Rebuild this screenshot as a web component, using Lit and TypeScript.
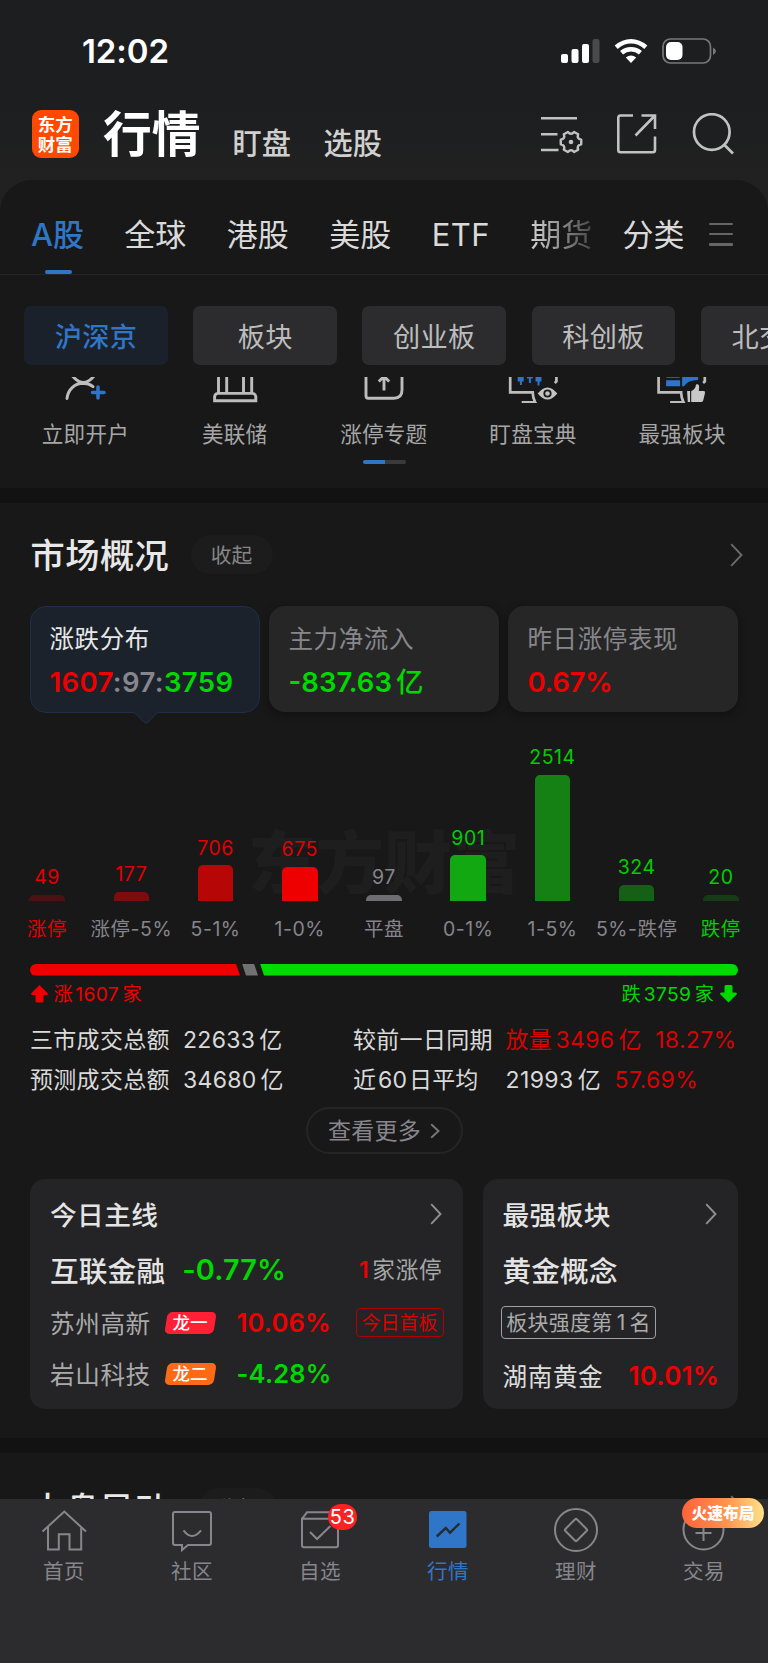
import { LitElement, html, css, svg, nothing } from "lit";
import { customElement } from "lit/decorators.js";

interface Bar { count: string; label: string; height: number; color: string; text: string; labelColor?: string }

const GREY = "#86858b";
const RED = "#e00000";
const GREEN = "#00ce00";

const bars: Bar[] = [
  { count: "49", label: "涨停", height: 6.5, color: "#4a1212", text: RED, labelColor: RED },
  { count: "177", label: "涨停-5%", height: 9.5, color: "#7e0c0c", text: RED },
  { count: "706", label: "5-1%", height: 36, color: "#b60606", text: RED },
  { count: "675", label: "1-0%", height: 34.5, color: "#ee0000", text: RED },
  { count: "97", label: "平盘", height: 6.5, color: "#6e6e70", text: GREY },
  { count: "901", label: "0-1%", height: 46, color: "#12a812", text: GREEN },
  { count: "2514", label: "1-5%", height: 126.5, color: "#158115", text: GREEN },
  { count: "324", label: "5%-跌停", height: 16.5, color: "#165f16", text: GREEN },
  { count: "20", label: "跌停", height: 6.5, color: "#173a17", text: GREEN, labelColor: GREEN },
];

const polar = (cx: number, cy: number, r: number, deg: number) => {
  const a = (deg * Math.PI) / 180;
  return `${(cx + r * Math.cos(a)).toFixed(2)} ${(cy + r * Math.sin(a)).toFixed(2)}`;
};

// Six-toothed gear outline: rounded teeth every 60 degrees with shallow notches between.
const gear = (cx: number, cy: number) =>
  "M" + [0, 60, 120, 180, 240, 300].map((d) =>
    `${polar(cx, cy, 10.5, d - 13)}L${polar(cx, cy, 10.5, d + 13)}Q${polar(cx, cy, 6.4, d + 30)} `).join("") +
  `${polar(cx, cy, 10.5, -13)}Z`;

const monitor = svg`
  <path d="M6 0V15.4H28.5Q28.6 21 31 25.3H17.5" fill="none" stroke="#bdbdbd" stroke-width="2.7"/>
  <path d="M52.2 0V4.5L50.5 6" fill="none" stroke="#bdbdbd" stroke-width="2.7"/>`;

const quick = [
  { label: "立即开户", icon: svg`
    <g fill="none" stroke-linecap="round" stroke-width="3">
      <path d="M17.5 -1Q28.5 12 39 -1M12 21.4C13.2 12 20 6.3 28 6.3Q34 6.5 38 9.6" stroke="#bdbdbd"/>
      <path d="M43 10V21M37.5 15.5H49" stroke="#2f74c6" stroke-width="3.6"/></g>` },
  { label: "美联储", icon: svg`
    <path d="M13.5 0V16M21.7 0V16M38.5 0V16M46.7 0V16M9.6 23.8V19.5Q10.4 16.4 13 16.4H47.5Q50.4 16.8 50.8 19.5V23.8Z" fill="none" stroke="#bdbdbd" stroke-width="2.9"/>` },
  { label: "涨停专题", icon: svg`
    <path d="M12 0V19Q12 21.2 14.2 21.2H40Q48 21.2 48 13V0M30 13.5V1M24.8 4.5L30 -.6L35.2 4.5" fill="none" stroke="#bdbdbd" stroke-width="2.9"/>` },
  { label: "盯盘宝典", icon: svg`<g transform="translate(1.2 0)">${monitor}
    <path d="M13.5 0h6v4.5h-1.8V8h-2V4.5h-2.2zM22.7 0h6v1.5h-2v4.5h-2V1.5h-2zM31.3 0h6v4.5h-2V8.5h-2V4.5h-2z" fill="#2f74c6"/>
    <path d="M33.5 16.5Q43.3 4.5 53.1 16.5Q43.3 28.5 33.5 16.5z" fill="#c4c4c4"/>
    <circle cx="43.3" cy="16.5" r="3.2" fill="#c4c4c4" stroke="#181818" stroke-width="1.8"/></g>` },
  { label: "最强板块", icon: svg`<g transform="translate(.6 0)">${monitor}
    <path d="M13.5 3.3H27.5V9.3H13.5zM14 0H27V.8H14zM29.5 0H45.5V3Q35 3 31.5 9.3H29.5z" fill="#2f74c6"/>
    <path d="M34.5 14h3v11h-2.3zM38.6 14.3Q43 12 43.4 7.5Q46.7 6.2 46.5 10.5L46.2 14H51.3Q52.7 14.2 52.4 16L50.6 23.5Q50 25 48.5 25H38.6z" fill="#c8c8c8"/></g>` },
];

const tabs = [
  { label: "首页", icon: svg`<path d="M2.5 25.5L24.3 5.5L46 25.5M8 21V43.5H18.8V28.2H29.5V43.5H41.2V21"/>` },
  { label: "社区", icon: svg`<path d="M7 6H41Q43 6 43 8V37Q43 39 41 39H20L14 44V39H7Q5 39 5 37V8Q5 6 7 6zM15.5 24.3Q24 35.5 33 24.3"/>` },
  { label: "自选", count: "53", icon: svg`<path d="M6 12.8L11 6.3H37L42 12.8M6 12.8H42V39Q42 41.2 40 41.2H8Q6 41.2 6 39zM14 26L21 33L34.5 20"/>` },
  { label: "行情", active: true, icon: svg`<rect x="5" y="5" width="37.5" height="37" rx="2.5" fill="#3076c8" stroke="none"/><path d="M12.7 30.5L21.8 22L26 26.7L35.5 17.5" stroke="#242c36" stroke-width="2.4"/>` },
  { label: "理财", icon: svg`<circle cx="24" cy="24" r="21"/><rect x="15.8" y="15.8" width="16.4" height="16.4" rx="1.5" transform="rotate(45 24 24)"/>` },
  { label: "交易", promo: "火速布局", icon: svg`<circle cx="23.5" cy="23.5" r="20"/><path d="M15.5 27H31.5M23.5 17V35"/>` },
];

const chevron = (w: number, h: number, color: string) => html`
  <svg width=${w} height=${h} viewBox="0 0 ${w} ${h}">
    <path d="M1.2 1.2L${w - 1.5} ${h / 2}L1.2 ${h - 1.2}" fill="none" stroke=${color} stroke-width="1.9"/>
  </svg>`;

@customElement("app-root")
export class AppRoot extends LitElement {
  static styles = css`
    :host { display: block; width: 768px; font-family: Inter, "Noto Sans CJK SC", sans-serif; color: #dedede; }
    * { box-sizing: border-box; }
    svg { display: block; flex: none; }
    .screen { width: 768px; height: 1663px; overflow: hidden; display: flex; flex-direction: column; background: #181818; white-space: nowrap; }
    .top { height: 180px; flex: none; background: linear-gradient(#1d1e20 0 60%, #212121); }
    .status { height: 102px; display: flex; align-items: center; padding: 0 51px 0 82px; color: #fff; }
    .time { font-size: 33px; font-weight: 600; letter-spacing: -.1px; line-height: 40px; flex: 1; }
    .signals { display: flex; align-items: center; gap: 14px; }
    .nav { height: 64px; display: flex; align-items: center; padding: 0 34px 0 31.5px; }
    .logo { width: 47.5px; height: 47.5px; border-radius: 9px; background: #ff4800; color: #fff; font-size: 17.5px; line-height: 19.5px; font-weight: 700; text-align: center; padding-top: 4px; font-family: "Noto Sans CJK SC", sans-serif; }
    .nav-title { font-size: 48.8px; line-height: 60px; font-weight: 700; color: #fff; margin: 2px 0 0 24px; }
    .nav-link { font-size: 29.2px; line-height: 40px; font-weight: 500; color: #d0d0d0; margin: 20px 0 0 32.5px; }
    .nav-title + .nav-link { margin-left: 32px; }
    .nav-icons { display: flex; margin-left: auto; gap: 33px; }
    .nav-icons .share { margin-right: 1px; }
    .head-bg { background: #212121; flex: none; }
    .markets { height: 95px; border-radius: 32px 32px 0 0; background: #181818; display: flex; padding-left: 31px; border-bottom: 1px solid #252525; font-size: 31px; line-height: 46px; color: #dadada; font-weight: 400; }
    .market-list { display: flex; gap: 40.5px; width: 591.5px; padding-top: 32px; }
    .market { position: relative; height: 62px; }
    .market.on { color: #3076c8; font-weight: 500; width: 52.8px; }
    .market.on::after { content: ""; position: absolute; left: 13.5px; bottom: 0; width: 27.5px; height: 4px; border-radius: 2px; background: #3076c8; }
    .market.etf { letter-spacing: .35px; }
    .fade { background: linear-gradient(90deg, #c8c8c8 10%, #303030 115%); background-clip: text; -webkit-background-clip: text; color: transparent; height: 47px; }
    .more { padding-top: 32px; }
    .menu { display: grid; gap: 7.5px; align-content: start; padding: 42.5px 0 0 24px; }
    .menu i { width: 24px; height: 2.7px; background: #666; border-radius: 1px; }
    .chips { display: flex; gap: 25.3px; padding: 31px 0 0 24px; height: 102px; flex: none; overflow: hidden; }
    .chip { width: 143.9px; height: 59px; flex: none; border-radius: 7px; background: #2c2c2e; color: #bcbcbd; font-size: 27.2px; letter-spacing: .3px; line-height: 63.5px; text-align: center; }
    .chip.on { background: #1a212a; color: #3076c8; font-weight: 500; }
    .quick { display: grid; grid-template-columns: repeat(5, 149.2px); padding: 0 10.8px; height: 83px; flex: none; justify-items: center; align-content: start; }
    .quick div { display: grid; justify-items: center; font-size: 21.6px; line-height: 30px; letter-spacing: .2px; color: #a6a6a6; gap: 16px; }
    .quick svg { overflow: hidden; }
    .pager { width: 43px; height: 4px; border-radius: 2px; align-self: center; background: linear-gradient(90deg, #3076c8 50%, #3a3a3c 50%); flex: none; }
    .band { height: 15px; background: #121212; flex: none; }
    .band.first { margin-top: 24px; }
    .section-head { display: flex; align-items: center; height: 103px; flex: none; padding: 0 25px 0 30.5px; }
    .section-head h2 { margin: 0; padding-top: 2px; font-size: 34.2px; letter-spacing: .5px; line-height: 44px; font-weight: 500; color: #e8e8e8; width: 160.5px; flex: none; }
    .pill { width: 82px; height: 39px; border-radius: 20px; background: #1c1c1c; color: #858585; font-size: 20.8px; line-height: 41px; text-align: center; padding-right: 1px; }
    .section-head svg { margin-left: auto; }
    .cards { display: flex; gap: 9px; padding: 0 30px; flex: none; }
    .card { position: relative; width: 230px; height: 106px; border-radius: 16px; background: #262626; padding: 15px 19.5px 0; box-shadow: 0 3px 10px #0005; font-size: 24.5px; line-height: 36px; color: #87868c; letter-spacing: .6px; font-weight: 400; }
    .card.on { background: #1b222b; color: #e8e8e8; border: 1px solid #1d3048; box-shadow: none; height: 107px; padding: 14px 18.5px 0; }
    .tip { position: absolute; left: 101.5px; top: 105px; }
    .value { font-size: 27.5px; line-height: 36px; font-weight: 600; letter-spacing: 0; padding-top: 7px; }
    .card.on .value { letter-spacing: .4px; }
    .value.up { letter-spacing: -.3px; }
    .up { color: #ee0000; } .down { color: #00d800; } .flat { color: #87868c; }
    .unit { margin-left: 4px; font-weight: 500; }
    .chart { position: relative; height: 233px; flex: none; display: grid; grid-template-columns: repeat(9, 1fr); padding: 0 5px 4px; align-items: end; margin-top: -1px; }
    .watermark { position: absolute; left: 248px; top: 97px; font: 900 68px/100px "Noto Sans CJK SC", sans-serif; color: #1e1e1e; }
    .col { position: relative; display: flex; flex-direction: column; align-items: center; font-size: 19.5px; line-height: 24px; letter-spacing: .5px; }
    .bar { width: 35.5px; border-radius: 5px 5px 0 0; margin: 5.5px 0 16px; }
    .label { color: #86858b; }
    .split { margin: 18.5px 30px 0; height: 12px; border-radius: 6px; overflow: hidden; display: flex; flex: none; }
    .seg-up { width: 210px; background: #ee0000; clip-path: polygon(0 0, 206px 0, 210px 100%, 0 100%); }
    .seg-flat { width: 16px; margin-left: 2px; background: #717173; clip-path: polygon(0 0, 12px 0, 100% 100%, 4px 100%); }
    .seg-down { flex: 1; margin-left: 2px; background: #00db00; clip-path: polygon(0 0, 100% 0, 100% 100%, 4px 100%); }
    .counts { display: flex; justify-content: space-between; align-items: center; padding: 2px 31px 0; height: 35px; flex: none; font-size: 19.2px; line-height: 28px; }
    .counts div { display: flex; align-items: center; }
    .counts .ar { margin-right: 5.5px; } .counts .al { margin-left: 6px; }
    .counts b { font-weight: 400; margin: 0 3.5px 0 3px; letter-spacing: .4px; }
    .counts .up b { margin-left: 2.5px; }
    .stats { display: grid; grid-template-columns: 153px 170px 152.5px auto; padding: 9px 0 0 30px; font-size: 23px; line-height: 40px; flex: none; letter-spacing: .3px; color: #dadada; }
    .stats u { text-decoration: none; margin-left: 4px; }
    .stats b { font-weight: 400; margin-left: 3.5px; } .stats s { text-decoration: none; margin-left: 13.5px; }
    .stats .near b, .stats .near u { margin-left: 2px; }
    .stats .near { letter-spacing: .1px; }
    .stats .red { color: #dc0000; }
    .stats .avg { letter-spacing: .4px; }
    .see { align-self: center; width: 157px; height: 47px; border-radius: 24px; border: 2px solid #252527; display: flex; align-items: center; justify-content: center; gap: 9px; color: #87868c; font-size: 23px; letter-spacing: .3px; margin: 7.5px 0 25px; flex: none; line-height: 40px; padding-top: 1px; }
    .panels { display: flex; gap: 20px; padding: 0 30px; flex: none; }
    .panel { height: 230px; border-radius: 15px; background: #242426; padding: 0 20px; width: 432.5px; flex: none; }
    .panel.side { width: 255.5px; }
    .row { display: flex; align-items: center; }
    .r1 { height: 69px; font-size: 26.7px; font-weight: 500; letter-spacing: .4px; justify-content: space-between; color: #e4e4e4; }
    .r1 svg { margin: 1px 1px 0 0; }
    .r2 { height: 42px; font-size: 28.6px; font-weight: 500; color: #e4e4e4; letter-spacing: .2px; }
    .r2 .num { font-size: 28.8px; margin-left: 17px; font-weight: 600; }
    .r2 .hits { font-size: 22.6px; font-weight: 400; color: #a8a8a8; margin-left: auto; letter-spacing: .8px; margin-top: -2px; }
    .hits b { font-weight: 600; color: #ee0000; margin-right: 3px; }
    .r3 { height: 65px; } .r4 { height: 37px; }
    .stock { font-size: 24.6px; letter-spacing: .6px; color: #aaa; width: 113.5px; flex: none; margin-top: -2px; }
    .rank { width: 53px; height: 22px; display: grid; place-items: center; position: relative; z-index: 0; color: #fff; font-size: 17.5px; line-height: 22px; font-weight: 500; flex: none; }
    .rank::before { content: ""; position: absolute; inset: 0 2px; border-radius: 5px; transform: skewX(-9deg); background: #ff2036; z-index: -1; }
    .rank.two::before { background: #ff6a17; }
    .pct { font-size: 25.5px; font-weight: 600; margin-left: 20px; letter-spacing: .2px; }
    .first-tag { width: 88px; height: 29px; border: 1px solid #b00000; border-radius: 4px; color: #dc0000; font-size: 19px; line-height: 29px; text-align: center; margin-left: auto; margin-right: -1px; }
    .strength { width: 155px; height: 33px; border: 1px solid #a0a0a0; border-radius: 4px; color: #ababab; font-size: 21px; line-height: 32px; text-align: center; margin-left: -1.5px; letter-spacing: .3px; }
    .strength b { font-weight: 400; margin: 0 4px; }
    .side .stock { color: #dedede; }
    .side .pct { margin-left: auto; margin-right: -1px; font-size: 26px; letter-spacing: .2px; }
    .side .r4 { padding-top: 4px; }
    .band.second { margin-top: 29px; }
    .next { height: 45.5px; overflow: hidden; flex: none; }
    .next .section-head { height: 108px; }
    .next h2 { width: 168.5px; padding-top: 6px; } .next .pill { width: 78px; line-height: 41px; }
    .tabbar { height: 164px; flex: none; background: #2c2c2e; display: grid; grid-template-columns: repeat(6, 128px); position: relative; color: #87868c; }
    .tab { position: relative; display: grid; justify-items: center; align-content: start; padding-top: 7px; font-size: 20.5px; line-height: 28px; letter-spacing: .5px; gap: 4px; }
    .tab.on { color: #3076c8; }
    .count { position: absolute; left: 72px; top: 5px; width: 29px; height: 26px; border-radius: 13px; background: #fa2222; color: #fff; font-size: 20px; line-height: 27px; text-align: center; }
    .promo { position: absolute; left: 42px; top: -1px; width: 82px; height: 30px; border-radius: 15px; background: linear-gradient(90deg, #ff6338, #ff9450 55%, #ffe289); color: #fff; font: 900 15.8px/30px "Noto Sans CJK SC", sans-serif; text-align: center; letter-spacing: 0; }
  `;

  private statusBar() {
    return html`<div class="status">
      <span class="time">12:02</span>
      <div class="signals">
        <svg width="39" height="26" viewBox="0 0 39 26" fill="#fff">
          <rect x="0" y="16" width="7" height="9" rx="2"/><rect x="10.5" y="11" width="7" height="14" rx="2"/>
          <rect x="21" y="6" width="7" height="19" rx="2"/><rect x="31.5" y="1" width="7" height="24" rx="2" fill="#4a4a4c"/>
        </svg>
        <svg width="34" height="26" viewBox="0 0 34 26" fill="none" stroke="#fff" stroke-width="4.6">
          <path d="M2.2 9.2Q9 3.2 17 3.2T31.8 9.2M7.6 14.7Q11.5 11.2 17 11.2T26.4 14.7"/>
          <path d="M11.8 19.5Q17 15.5 22.2 19.5L17 25z" fill="#fff" stroke="none"/>
        </svg>
        <svg width="55" height="26" viewBox="0 0 55 26">
          <rect x="1" y="1" width="47.5" height="24" rx="7.5" fill="none" stroke="#77787a" stroke-width="1.7"/>
          <rect x="4" y="4" width="16.5" height="18" rx="5" fill="#fff"/>
          <path d="M51 9.5Q54 11 54 13T51 17z" fill="#77787a"/>
        </svg>
      </div>
    </div>`;
  }

  private nav() {
    return html`<div class="nav">
      <div class="logo">东方<br>财富</div>
      <span class="nav-title">行情</span><span class="nav-link">盯盘</span><span class="nav-link">选股</span>
      <div class="nav-icons">
        <svg width="43" height="42" viewBox="0 0 43 42" fill="none" stroke="#c2c2c2" stroke-width="2.6">
          <path d="M1 5.3H37M1 21.3H17.5M1 37H18.5"/>
          <path d=${gear(31, 29)} stroke-width="2.4" stroke-linejoin="round"/>
          <circle cx="31" cy="29" r="2.3" fill="#c2c2c2" stroke="none"/>
        </svg>
        <svg class="share" width="42" height="42" viewBox="0 0 42 42" fill="none" stroke="#c2c2c2" stroke-width="2.6">
          <path d="M17 2.5H4.5Q2.3 2.5 2.3 4.7V37Q2.3 39.3 4.5 39.3H36.7Q39 39.3 39 37V23.5M25.5 2.5H39V16M38.5 3L19.5 22.5"/>
        </svg>
        <svg width="42" height="42" viewBox="0 0 42 42" fill="none" stroke="#c2c2c2" stroke-width="2.7">
          <circle cx="19.8" cy="19" r="17.8"/><path d="M31.5 31L41 40.5"/>
        </svg>
      </div>
    </div>`;
  }

  private overview() {
    return html`
      <div class="section-head"><h2>市场概况</h2><span class="pill">收起</span>${chevron(13, 24, "#6b6b6d")}</div>
      <div class="cards">
        <div class="card on">涨跌分布
          <div class="value"><span class="up">1607</span><span class="flat">:97:</span><span class="down">3759</span></div>
          <svg class="tip" width="26" height="13" viewBox="0 0 26 13"><path d="M0 0H26Q24 .8 22 3L15.5 10Q13 12.5 10.5 10L4 3Q2 .8 0 0z" fill="#1b222b"/><path d="M0 .5Q2 .8 4 3L10.5 10Q13 12.5 15.5 10L22 3Q24 .8 26 .5" fill="none" stroke="#1d3048"/></svg>
        </div>
        <div class="card">主力净流入<div class="value down">-837.63<span class="unit">亿</span></div></div>
        <div class="card">昨日涨停表现<div class="value up">0.67%</div></div>
      </div>
      <div class="chart">
        <span class="watermark">东方财富</span>
        ${bars.map((b) => html`<div class="col">
          <span style="color:${b.text}">${b.count}</span>
          <i class="bar" style="height:${b.height}px;background:${b.color}"></i>
          <span class="label" style=${b.labelColor ? `color:${b.labelColor}` : nothing}>${b.label}</span>
        </div>`)}
      </div>
      <div class="split"><i class="seg-up"></i><i class="seg-flat"></i><i class="seg-down"></i></div>
      <div class="counts">
        <div class="up"><svg class="ar" width="17" height="18" viewBox="0 0 17 18"><path d="M8.5 0L17 8.5Q17 10 15.5 10H12.5V16Q12.5 17.5 11 17.5H6Q4.5 17.5 4.5 16V10H1.5Q0 10 0 8.5z" fill="#ee0000"/></svg>涨<b>1607</b>家</div>
        <div class="down">跌<b>3759</b>家<svg class="al" width="17" height="18" viewBox="0 0 17 18"><path d="M8.5 17.5L17 9Q17 7.5 15.5 7.5H12.5V1.5Q12.5 0 11 0H6Q4.5 0 4.5 1.5V7.5H1.5Q0 7.5 0 9z" fill="#00d800"/></svg></div>
      </div>
      <div class="stats">
        <span>三市成交总额</span><span>22633<u>亿</u></span><span>较前一日同期</span><span class="red">放量<b>3496</b><u>亿</u><s>18.27%</s></span>
        <span>预测成交总额</span><span>34680<u>亿</u></span><span class="near">近<b>60</b><u>日平均</u></span><span class="avg">21993<u>亿</u><s class="red">57.69%</s></span>
      </div>
      <div class="see">查看更多${chevron(10, 16, "#77767b")}</div>`;
  }

  private panels() {
    return html`<div class="panels">
      <div class="panel">
        <div class="row r1">今日主线${chevron(12, 22, "#909092")}</div>
        <div class="row r2">互联金融<span class="num down">-0.77%</span><span class="hits"><b>1</b>家涨停</span></div>
        <div class="row r3"><span class="stock">苏州高新</span><span class="rank">龙一</span><span class="pct up">10.06%</span><span class="first-tag">今日首板</span></div>
        <div class="row r4"><span class="stock">岩山科技</span><span class="rank two">龙二</span><span class="pct down">-4.28%</span></div>
      </div>
      <div class="panel side">
        <div class="row r1">最强板块${chevron(12, 22, "#909092")}</div>
        <div class="row r2">黄金概念</div>
        <div class="row r3"><span class="strength">板块强度第<b>1</b>名</span></div>
        <div class="row r4"><span class="stock">湖南黄金</span><span class="pct up">10.01%</span></div>
      </div>
    </div>`;
  }

  render() {
    return html`<div class="screen">
      <div class="top">${this.statusBar()}${this.nav()}</div>
      <div class="head-bg"><div class="markets">
        <div class="market-list">
          <span class="market on">A股</span><span class="market">全球</span><span class="market">港股</span><span class="market">美股</span><span class="market etf">ETF</span><span class="market fade">期货</span>
        </div>
        <span class="more">分类</span><div class="menu"><i></i><i></i><i></i></div>
      </div></div>
      <div class="chips">${["沪深京", "板块", "创业板", "科创板", "北交所"].map((c, i) => html`<span class="chip ${i ? "" : "on"}">${c}</span>`)}</div>
      <div class="quick">${quick.map((q) => html`<div><svg width="60" height="26" viewBox="0 0 60 26">${q.icon}</svg>${q.label}</div>`)}</div>
      <div class="pager"></div>
      <div class="band first"></div>
      ${this.overview()}
      ${this.panels()}
      <div class="band second"></div>
      <div class="next"><div class="section-head"><h2>大盘异动</h2><span class="pill">收起</span>${chevron(13, 24, "#6b6b6d")}</div></div>
      <div class="tabbar">${tabs.map((t) => html`<div class="tab ${t.active ? "on" : ""}">
        <svg width="48" height="48" viewBox="0 0 48 48" fill="none" stroke="#87868c" stroke-width="2">${t.icon}</svg>${t.label}
        ${t.count ? html`<span class="count">${t.count}</span>` : nothing}
        ${t.promo ? html`<span class="promo">${t.promo}</span>` : nothing}
      </div>`)}</div>
    </div>`;
  }
}
